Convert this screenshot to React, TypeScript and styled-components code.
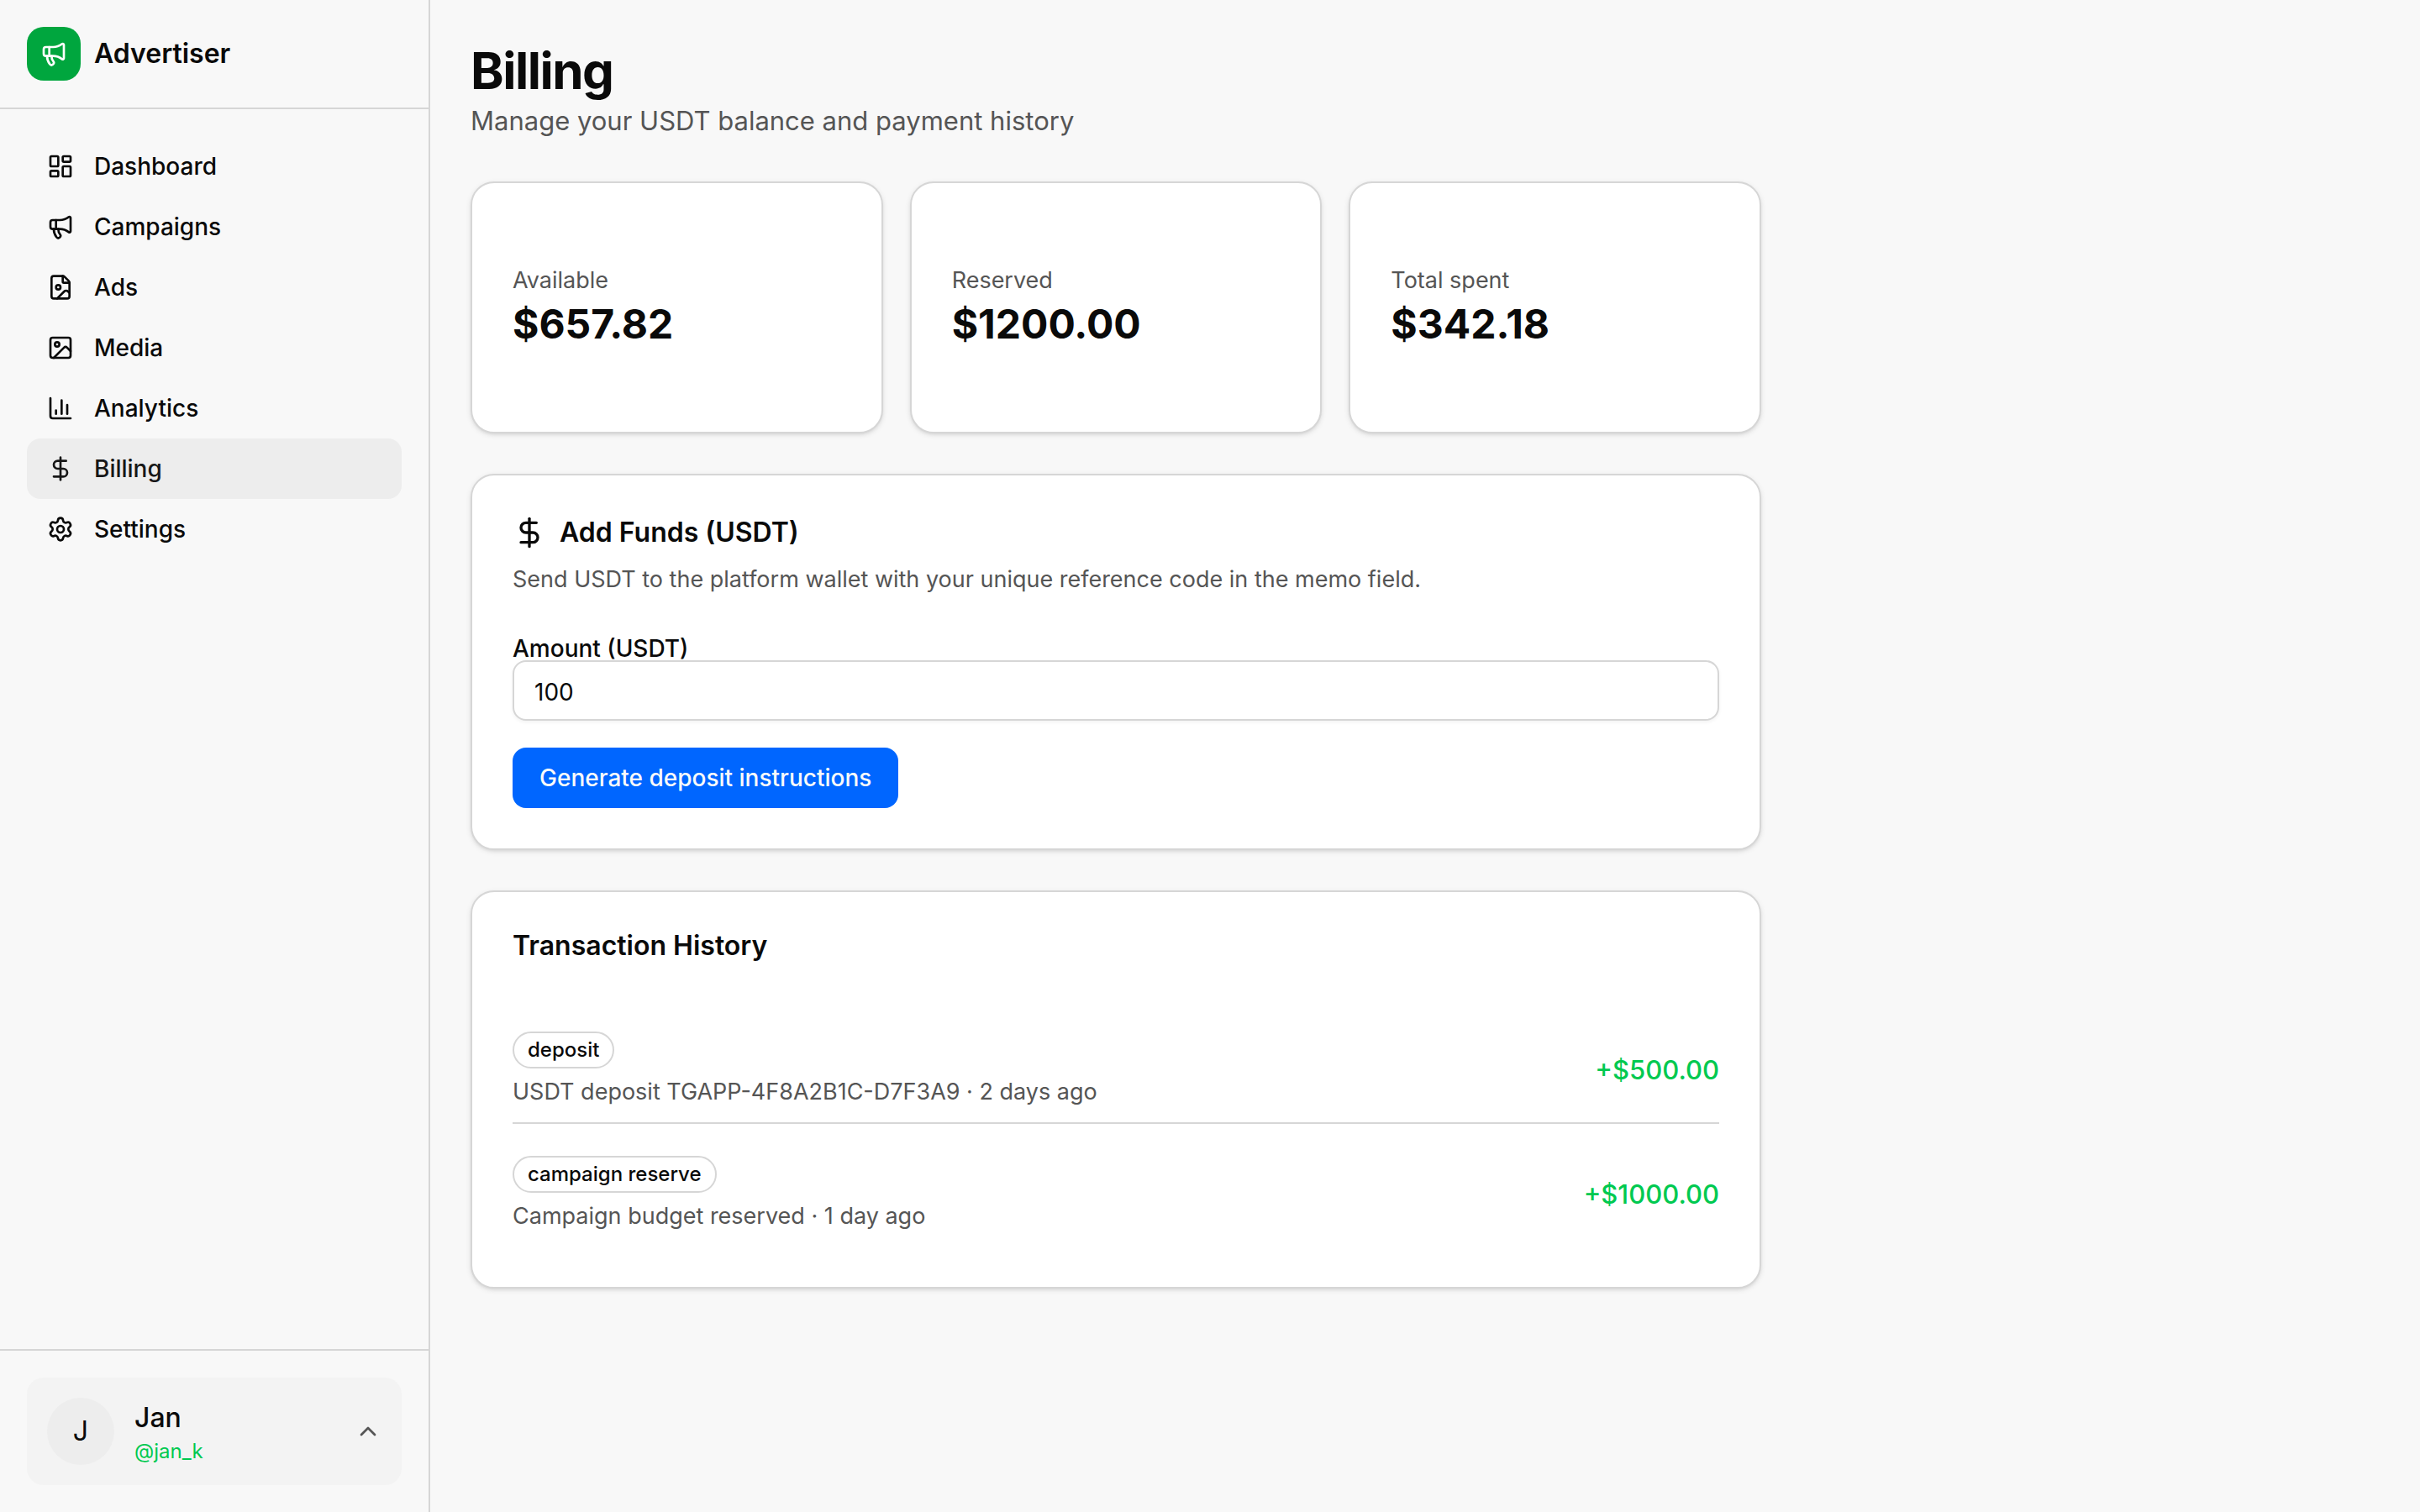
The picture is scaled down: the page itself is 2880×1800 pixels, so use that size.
import React, { useState } from "react";
import styled, { createGlobalStyle } from "styled-components";
import {
  ChartColumn,
  ChevronUp,
  DollarSign,
  FileImage,
  Image,
  LayoutDashboard,
  Megaphone,
  Settings,
} from "lucide-react";

const color = {
  page: "#f8f8f8",
  card: "#ffffff",
  border: "#d6d6d6",
  text: "#0a0a0a",
  muted: "#555555",
  active: "#ededed",
  soft: "#f3f3f3",
  brand: "#00a63e",
  green: "#00c950",
  blue: "#0066ff",
};

const GlobalStyle = createGlobalStyle`
  *, *::before, *::after { box-sizing: border-box; }
  body {
    margin: 0;
    background: ${color.page};
    color: ${color.text};
    font-family: Inter, "Liberation Sans", sans-serif;
    font-size: 32px;
    line-height: 48px;
    -webkit-font-smoothing: antialiased;
  }
  h1, h2, p, ul, dl, dd { margin: 0; padding: 0; }
  ul { list-style: none; }
  button, input { font: inherit; color: inherit; }
`;

const Shell = styled.div`
  display: grid;
  grid-template-columns: 512px minmax(0, 1fr);
  min-height: 100vh;
`;

const Sidebar = styled.aside`
  display: flex;
  flex-direction: column;
  border-right: 2px solid ${color.border};
`;

const Brand = styled.div`
  display: flex;
  align-items: center;
  gap: 16px;
  padding: 32px;
  border-bottom: 2px solid ${color.border};
  font-weight: 600;
`;

const BrandMark = styled.span`
  display: grid;
  place-items: center;
  width: 64px;
  height: 64px;
  border-radius: 20px;
  background: ${color.brand};
  color: #ffffff;
`;

const Nav = styled.nav`
  flex: 1;
  padding: 32px;
`;

const NavLink = styled.a<{ $active: boolean }>`
  display: flex;
  align-items: center;
  gap: 24px;
  height: 72px;
  padding: 0 24px;
  border-radius: 16px;
  background: ${(p) => (p.$active ? color.active : "transparent")};
  color: ${(p) => (p.$active ? "#171717" : color.text)};
  font-size: 28px;
  line-height: 40px;
  font-weight: 500;
  text-decoration: none;
`;

const SidebarFooter = styled.div`
  padding: 32px;
  border-top: 2px solid ${color.border};
`;

const UserButton = styled.button`
  display: flex;
  align-items: center;
  gap: 24px;
  width: 100%;
  padding: 24px;
  border: 0;
  border-radius: 20px;
  background: ${color.soft};
  text-align: left;
`;

const Avatar = styled.span`
  display: grid;
  place-items: center;
  width: 80px;
  height: 80px;
  border-radius: 50%;
  background: ${color.active};
`;

const UserText = styled.span`
  display: flex;
  flex: 1;
  flex-direction: column;
`;

const UserName = styled.span`
  font-weight: 500;
`;

const UserHandle = styled.span`
  color: ${color.green};
  font-size: 24px;
  line-height: 32px;
`;

const Main = styled.main`
  display: flex;
  flex-direction: column;
  gap: 48px;
  max-width: 1632px;
  padding: 48px;
`;

const PageTitle = styled.h1`
  font-size: 60px;
  line-height: 72px;
  font-weight: 700;
  letter-spacing: -0.025em;
`;

const PageLead = styled.p`
  color: ${color.muted};
  font-size: 31px;
`;

const StatGrid = styled.dl`
  display: grid;
  grid-template-columns: repeat(3, minmax(0, 1fr));
  gap: 32px;
`;

const Card = styled.section`
  display: flex;
  flex-direction: column;
  gap: 48px;
  padding: 48px;
  border: 2px solid ${color.border};
  border-radius: 28px;
  background: ${color.card};
  box-shadow: 0 2px 6px rgba(0, 0, 0, 0.1), 0 2px 4px -2px rgba(0, 0, 0, 0.1);
`;

const StatCard = styled(Card).attrs({ as: "div" })`
  gap: 0;
  padding: 96px 48px;
`;

const StatLabel = styled.dt`
  color: ${color.muted};
  font-size: 27px;
  line-height: 40px;
`;

const StatValue = styled.dd`
  font-size: 48px;
  line-height: 64px;
  font-weight: 700;
`;

const CardHeader = styled.header`
  display: flex;
  flex-direction: column;
  gap: 16px;
`;

const CardTitle = styled.h2`
  display: flex;
  align-items: center;
  gap: 16px;
  font-size: 32px;
  line-height: 32px;
  font-weight: 600;
`;

const CardText = styled.p`
  color: ${color.muted};
  font-size: 27px;
  line-height: 40px;
`;

const FundsForm = styled.form`
  display: flex;
  flex-direction: column;
  align-items: flex-start;
  gap: 32px;
`;

const Field = styled.div`
  display: flex;
  flex-direction: column;
  width: 100%;
`;

const FieldLabel = styled.label`
  font-size: 28px;
  line-height: 28px;
  font-weight: 500;
`;

const FieldInput = styled.input`
  width: 100%;
  height: 72px;
  padding: 10px 24px 6px;
  border: 2px solid ${color.border};
  border-radius: 16px;
  background: ${color.card};
  box-shadow: 0 2px 4px rgba(0, 0, 0, 0.05);
  font-size: 28px;
  line-height: 40px;
`;

const PrimaryButton = styled.button`
  height: 72px;
  padding: 0 32px;
  border: 0;
  border-radius: 16px;
  background: ${color.blue};
  color: #fafafa;
  font-size: 28px;
  line-height: 40px;
  font-weight: 500;
`;

const TransactionRow = styled.li`
  display: flex;
  align-items: center;
  justify-content: space-between;
  padding: 38px 0 16px;

  &:not(:last-child) {
    border-bottom: 2px solid ${color.border};
  }
`;

const TransactionInfo = styled.div`
  display: flex;
  flex-direction: column;
  align-items: flex-start;
  gap: 8px;
`;

const Badge = styled.span`
  padding: 4px 16px;
  border: 2px solid ${color.border};
  border-radius: 22px;
  font-size: 24px;
  line-height: 32px;
  font-weight: 500;
`;

const Amount = styled.span`
  color: ${color.green};
  font-size: 31px;
  font-weight: 500;
`;

const navItems = [
  { label: "Dashboard", Icon: LayoutDashboard },
  { label: "Campaigns", Icon: Megaphone },
  { label: "Ads", Icon: FileImage },
  { label: "Media", Icon: Image },
  { label: "Analytics", Icon: ChartColumn },
  { label: "Billing", Icon: DollarSign },
  { label: "Settings", Icon: Settings },
];

const stats = [
  { label: "Available", value: "$657.82" },
  { label: "Reserved", value: "$1200.00" },
  { label: "Total spent", value: "$342.18" },
];

const transactions = [
  {
    kind: "deposit",
    detail: "USDT deposit TGAPP-4F8A2B1C-D7F3A9 · 2 days ago",
    amount: "+$500.00",
  },
  {
    kind: "campaign reserve",
    detail: "Campaign budget reserved · 1 day ago",
    amount: "+$1000.00",
  },
];

export default function App() {
  const [amount, setAmount] = useState("100");

  return (
    <>
      <GlobalStyle />
      <Shell>
        <Sidebar>
          <Brand>
            <BrandMark>
              <Megaphone size={32} />
            </BrandMark>
            Advertiser
          </Brand>
          <Nav>
            <ul>
              {navItems.map(({ label, Icon }) => (
                <li key={label}>
                  <NavLink
                    href={`#${label.toLowerCase()}`}
                    $active={label === "Billing"}
                    aria-current={label === "Billing" ? "page" : undefined}
                  >
                    <Icon size={32} />
                    {label}
                  </NavLink>
                </li>
              ))}
            </ul>
          </Nav>
          <SidebarFooter>
            <UserButton type="button">
              <Avatar>J</Avatar>
              <UserText>
                <UserName>Jan</UserName>
                <UserHandle>@jan_k</UserHandle>
              </UserText>
              <ChevronUp size={32} color={color.muted} />
            </UserButton>
          </SidebarFooter>
        </Sidebar>

        <Main>
          <header>
            <PageTitle>Billing</PageTitle>
            <PageLead>Manage your USDT balance and payment history</PageLead>
          </header>

          <StatGrid>
            {stats.map((stat) => (
              <StatCard key={stat.label}>
                <StatLabel>{stat.label}</StatLabel>
                <StatValue>{stat.value}</StatValue>
              </StatCard>
            ))}
          </StatGrid>

          <Card>
            <CardHeader>
              <CardTitle>
                <DollarSign size={40} />
                Add Funds (USDT)
              </CardTitle>
              <CardText>
                Send USDT to the platform wallet with your unique reference code in the memo field.
              </CardText>
            </CardHeader>
            <FundsForm onSubmit={(event) => event.preventDefault()}>
              <Field>
                <FieldLabel htmlFor="amount">Amount (USDT)</FieldLabel>
                <FieldInput
                  id="amount"
                  inputMode="decimal"
                  value={amount}
                  onChange={(event) => setAmount(event.target.value)}
                />
              </Field>
              <PrimaryButton type="submit">Generate deposit instructions</PrimaryButton>
            </FundsForm>
          </Card>

          <Card>
            <CardTitle>Transaction History</CardTitle>
            <ul>
              {transactions.map((item) => (
                <TransactionRow key={item.kind}>
                  <TransactionInfo>
                    <Badge>{item.kind}</Badge>
                    <CardText>{item.detail}</CardText>
                  </TransactionInfo>
                  <Amount>{item.amount}</Amount>
                </TransactionRow>
              ))}
            </ul>
          </Card>
        </Main>
      </Shell>
    </>
  );
}
